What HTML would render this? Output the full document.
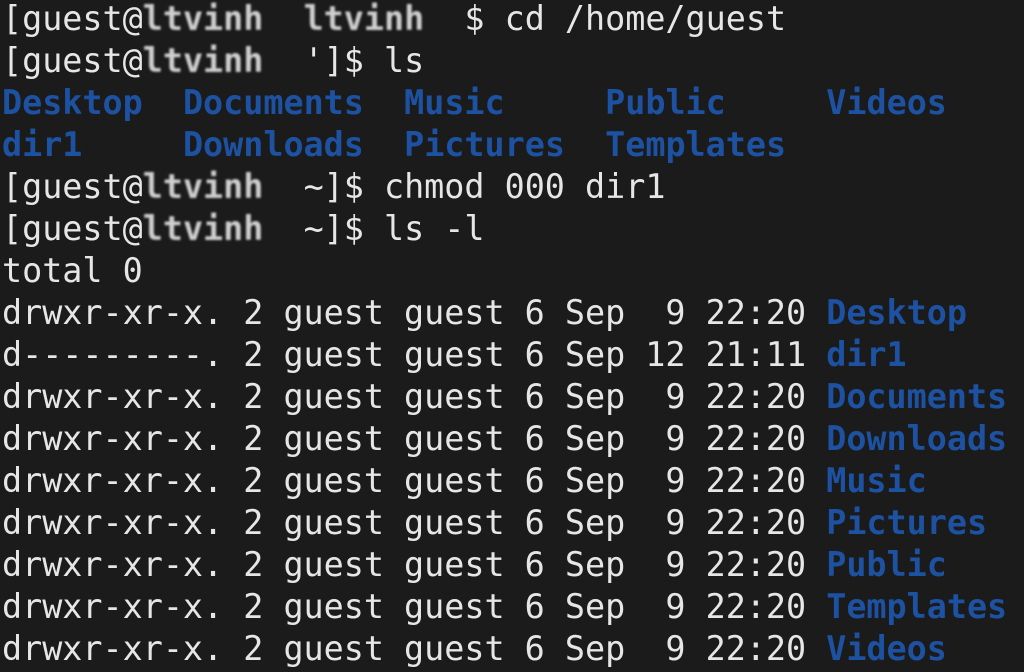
<!DOCTYPE html>
<html><head><meta charset="utf-8"><style>
html,body{margin:0;padding:0;background:#1b1b1b;width:1024px;height:672px;overflow:hidden}
pre{margin:0;padding:0 0 0 2px;position:relative;top:-2px;font-family:"DejaVu Sans Mono","Liberation Mono",monospace;font-size:33.4px;line-height:42px;color:#e6e6e6;white-space:pre}
.b{color:#1d52a3;font-weight:bold}
.h{color:#cfcfcf;font-weight:bold;filter:blur(1px)}
</style></head><body><pre>[guest@<span class="h">ltvinh</span>  <span class="h">ltvinh</span>  $ cd /home/guest
[guest@<span class="h">ltvinh</span>  ']$ ls
<span class="b">Desktop</span>  <span class="b">Documents</span>  <span class="b">Music</span>     <span class="b">Public</span>     <span class="b">Videos</span>
<span class="b">dir1</span>     <span class="b">Downloads</span>  <span class="b">Pictures</span>  <span class="b">Templates</span>
[guest@<span class="h">ltvinh</span>  ~]$ chmod 000 dir1
[guest@<span class="h">ltvinh</span>  ~]$ ls -l
total 0
drwxr-xr-x. 2 guest guest 6 Sep  9 22:20 <span class="b">Desktop</span>
d---------. 2 guest guest 6 Sep 12 21:11 <span class="b">dir1</span>
drwxr-xr-x. 2 guest guest 6 Sep  9 22:20 <span class="b">Documents</span>
drwxr-xr-x. 2 guest guest 6 Sep  9 22:20 <span class="b">Downloads</span>
drwxr-xr-x. 2 guest guest 6 Sep  9 22:20 <span class="b">Music</span>
drwxr-xr-x. 2 guest guest 6 Sep  9 22:20 <span class="b">Pictures</span>
drwxr-xr-x. 2 guest guest 6 Sep  9 22:20 <span class="b">Public</span>
drwxr-xr-x. 2 guest guest 6 Sep  9 22:20 <span class="b">Templates</span>
drwxr-xr-x. 2 guest guest 6 Sep  9 22:20 <span class="b">Videos</span></pre></body></html>
